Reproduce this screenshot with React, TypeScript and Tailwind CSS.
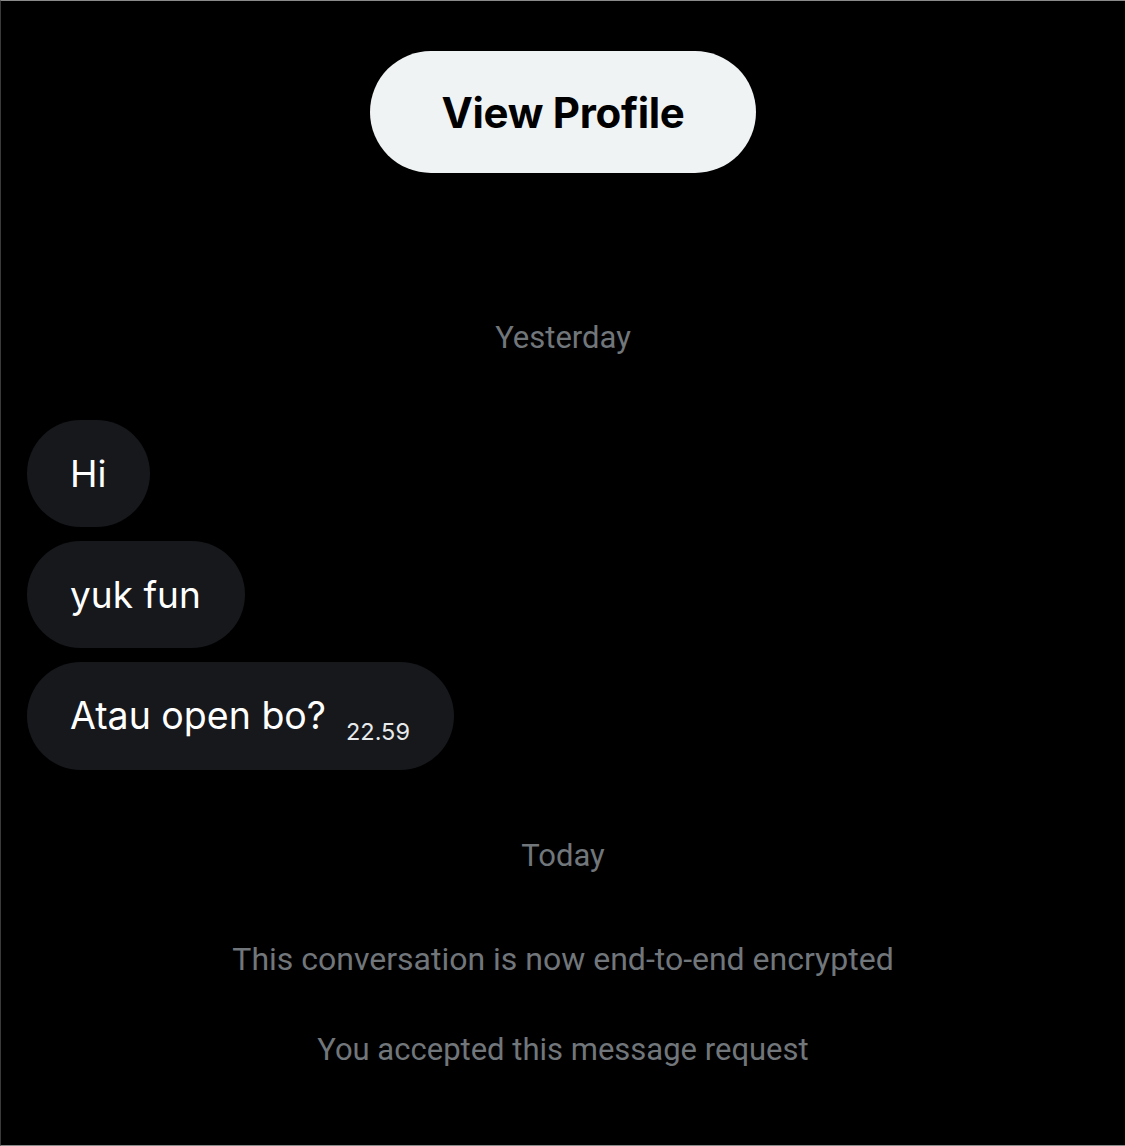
export default function App() {
  const messages = ['Hi', 'yuk fun'];

  return (
    <div
      className="w-[1125px] h-[1146px] bg-black border-t border-b border-l border-t-[#8a8a8a] border-b-[#8a8a8a] border-l-[#3a3a3a] flex flex-col overflow-hidden"
      style={{ fontFamily: 'Roboto, "Liberation Sans", sans-serif' }}
    >
      {/* View profile */}
      <div className="flex justify-center pt-[50px]">
        <button
          className="w-[386px] h-[122px] rounded-full bg-[#eff3f4] text-black text-[42px] font-bold tracking-[-0.3px] flex items-center justify-center"
          style={{ fontFamily: 'Inter, Roboto, sans-serif' }}
        >
          View Profile
        </button>
      </div>

      {/* Yesterday */}
      <div className="mt-[147px] text-center text-[31px] leading-[36px] text-[#71767b]">Yesterday</div>

      {/* Messages */}
      <div
        className="mt-[64px] pl-[26px] flex flex-col items-start gap-[14px]"
        style={{ fontFamily: 'Inter, Roboto, sans-serif' }}
      >
        {messages.map((m) => (
          <div key={m} className="h-[107px] rounded-full bg-[#16181c] pl-[43px] pr-[44px] flex items-center text-white text-[37px]">
            {m}
          </div>
        ))}
        <div className="h-[108px] rounded-full bg-[#16181c] pl-[43px] pr-[44px] flex items-center text-white">
          <span className="text-[37.5px]">Atau open bo?</span>
          <span className="ml-[20px] mt-[32px] text-[23.5px] text-[#e7e9ea]">22.59</span>
        </div>
      </div>

      {/* Today */}
      <div className="mt-[68px] text-center text-[31px] leading-[36px] text-[#71767b]">Today</div>

      <div className="mt-[66px] text-center text-[32px] leading-[38px] text-[#71767b]">
        This conversation is now end-to-end encrypted
      </div>
      <div className="mt-[53px] text-center text-[31px] leading-[38px] text-[#71767b]">
        You accepted this message request
      </div>
    </div>
  );
}
